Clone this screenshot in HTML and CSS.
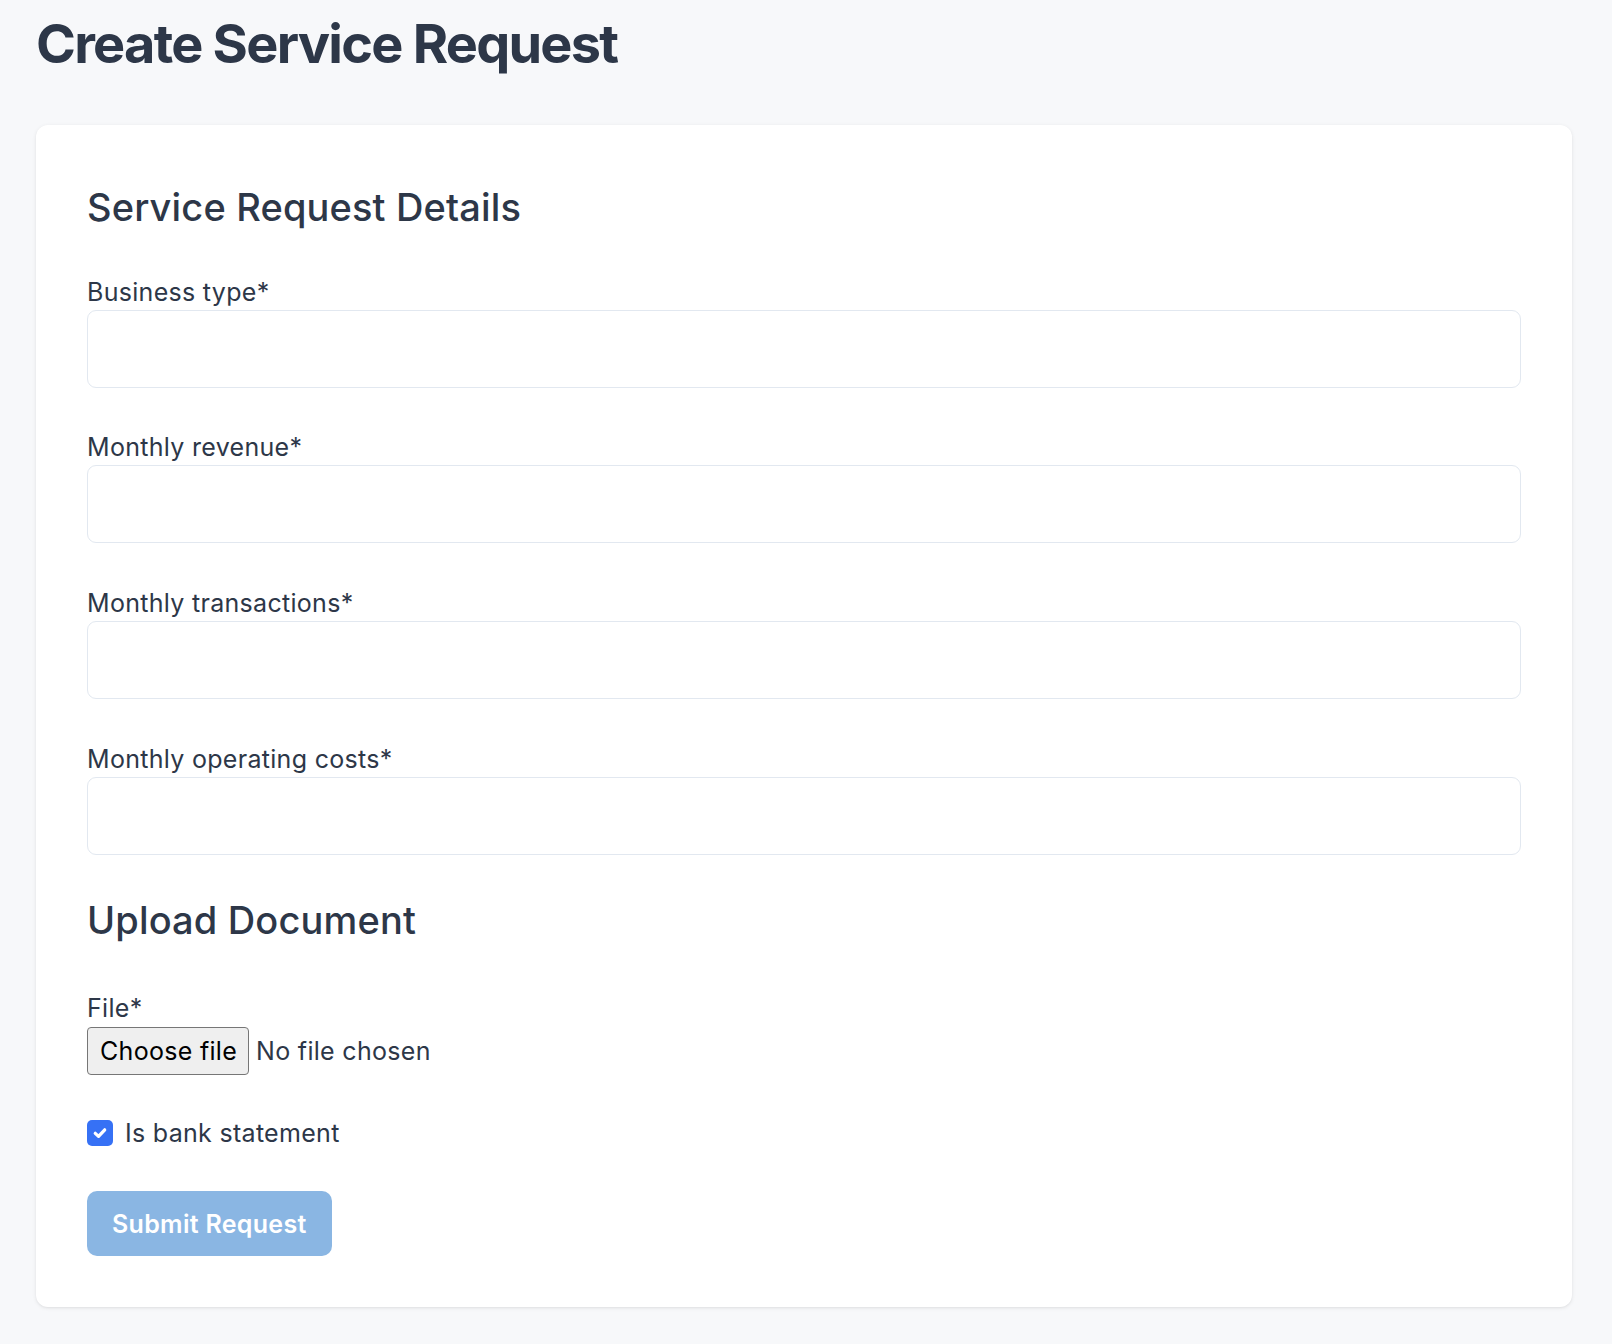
FILE: index.html
```html
<!DOCTYPE html>
<html lang="en">
<head>
<meta charset="utf-8">
<title>Create Service Request</title>
<link rel="stylesheet" href="styles.css">
</head>
<body>
<main class="page">
  <h1 class="page-title">Create Service Request</h1>
  <form class="card">
    <section class="section">
      <h2 class="section-title">Service Request Details</h2>
      <div class="field">
        <label class="label" for="bt">Business type*</label>
        <input class="input" id="bt" type="text">
      </div>
      <div class="field">
        <label class="label" for="mr">Monthly revenue*</label>
        <input class="input" id="mr" type="text">
      </div>
      <div class="field">
        <label class="label" for="mt">Monthly transactions*</label>
        <input class="input" id="mt" type="text">
      </div>
      <div class="field">
        <label class="label" for="mc">Monthly operating costs*</label>
        <input class="input" id="mc" type="text">
      </div>
    </section>
    <section class="section section-upload">
      <h2 class="section-title">Upload Document</h2>
      <div class="file-field">
        <span class="label">File*</span>
        <div class="file-row">
          <span class="file-button">Choose file</span>
          <span class="file-status">No file chosen</span>
        </div>
      </div>
      <label class="check-row">
        <span class="checkbox">
          <svg viewBox="0 0 16 16" width="16" height="16" aria-hidden="true"><path d="M3.8 8.3 L6.7 11 L12.2 5.2" fill="none" stroke="#fff" stroke-width="2.9" stroke-linecap="round" stroke-linejoin="round"/></svg>
        </span>
        <span class="check-text">Is bank statement</span>
      </label>
      <button class="submit" type="button" disabled>Submit Request</button>
    </section>
  </form>
</main>
</body>
</html>
```

FILE: styles.css
```css
* { box-sizing: border-box; }

html, body {
  margin: 0;
  padding: 0;
}

body {
  background: #f7f8fa;
  color: #2d3748;
  font-family: Inter, "Noto Sans", "Liberation Sans", sans-serif;
}

.page {
  padding: 12px 40px 37px 36px;
}

.page-title {
  margin: 0 0 48px 0;
  font-size: 54px;
  line-height: 64.8px;
  font-weight: 700;
  letter-spacing: -1.75px;
}

.card {
  background: #ffffff;
  border-radius: 12px;
  box-shadow: 0 1px 4px rgba(0, 0, 0, 0.08), 0 1px 2px rgba(0, 0, 0, 0.04);
  padding: 58px 51px 51px 51px;
}

.section-title {
  margin: 0 0 43px 0;
  font-size: 38px;
  line-height: 48px;
  font-weight: 500;
  letter-spacing: 0.15px;
}

.section-upload .section-title {
  margin-top: 11px;
  margin-bottom: 46px;
}

.field {
  margin-bottom: 41.6px;
}

.label {
  display: block;
  font-size: 25px;
  line-height: 36px;
  font-weight: 400;
  letter-spacing: 0.3px;
}

.input {
  display: block;
  width: 100%;
  height: 78px;
  margin: 0;
  border: 1px solid #e2e8f0;
  border-radius: 9px;
  background: #fff;
  font: inherit;
  font-size: 24px;
  padding: 0 18px;
  outline: none;
}

.file-row {
  display: flex;
  align-items: center;
  gap: 7px;
  margin-top: 1px;
}

.file-button {
  display: inline-flex;
  align-items: center;
  height: 48px;
  padding: 0 11px 0 12px;
  background: #efefef;
  border: 1px solid #767676;
  border-radius: 4px;
  color: #000;
  font-size: 25px;
  letter-spacing: 0.3px;
}

.file-status {
  font-size: 25px;
  letter-spacing: 0.3px;
}

.check-row {
  display: flex;
  align-items: center;
  gap: 12px;
  margin-top: 40px;
  height: 36px;
  font-size: 25px;
  letter-spacing: 0.3px;
}

.checkbox {
  width: 26px;
  height: 26px;
  border-radius: 5px;
  background: #3671f5;
  display: inline-flex;
  align-items: center;
  justify-content: center;
}

.checkbox svg {
  width: 18px;
  height: 18px;
}

.submit {
  display: block;
  margin-top: 40px;
  height: 65px;
  padding: 0 25px;
  border: none;
  border-radius: 10px;
  background: #8ab6e3;
  color: #fff;
  font: inherit;
  font-size: 25px;
  font-weight: 600;
  letter-spacing: 0.3px;
}
```
